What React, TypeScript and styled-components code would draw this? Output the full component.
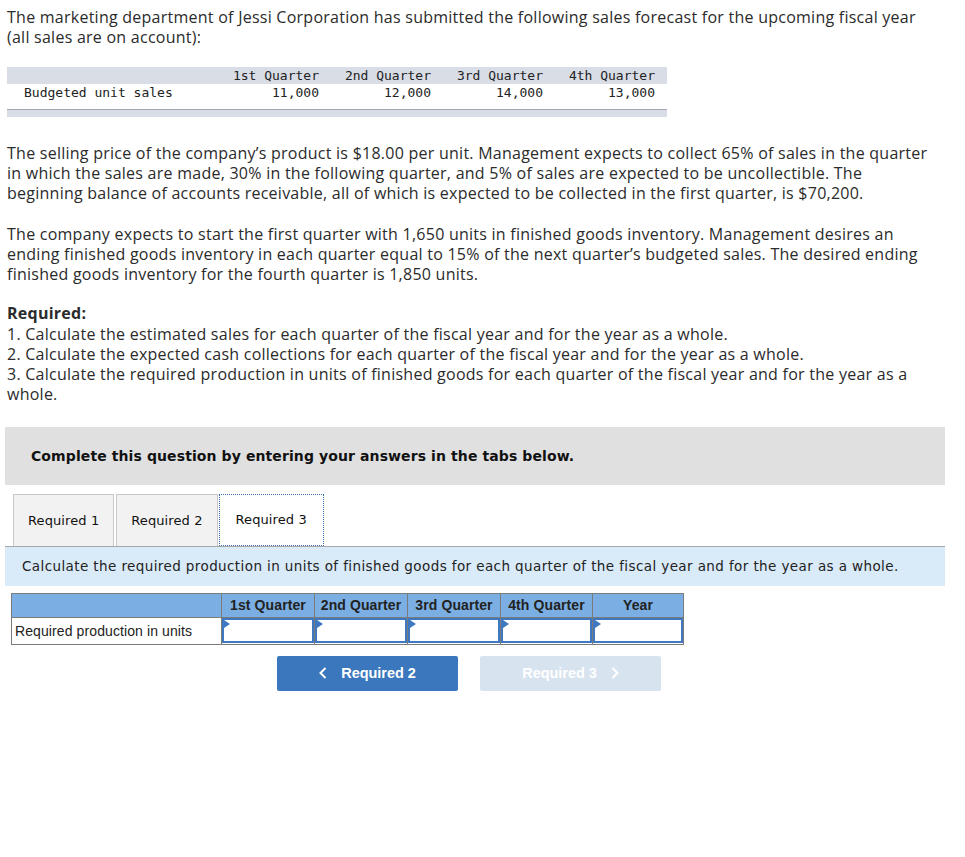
import React from 'react';
import styled, { createGlobalStyle } from 'styled-components';

const GlobalStyle = createGlobalStyle`
  html, body {
    margin: 0;
    padding: 0;
    background: #fff;
  }
  body {
    font-family: "Open Sans", "Liberation Sans", sans-serif;
    color: #2b2b2b;
  }
`;

const Page = styled.div`
  width: 940px;
  padding: 7px 0 0 5px;
`;

const Paragraph = styled.p<{ $gap?: number }>`
  width: 930px;
  margin: ${(p) => p.$gap ?? 0}px 0 0 0;
  padding-left: 2px;
  font-size: 16px;
  letter-spacing: 0.25px;
  line-height: 20px;
`;

const Heading = styled.div`
  font-weight: 700;
  margin-bottom: 1px;
`;

const ForecastTable = styled.table`
  margin: 20px 0 0 2px;
  border-collapse: collapse;
  font-family: "DejaVu Sans Mono", "Liberation Mono", monospace;
  font-size: 13px;
  color: #222;
`;

const ForecastHead = styled.th<{ $label?: boolean }>`
  background: #d9dde6;
  font-weight: 400;
  text-align: right;
  padding: 0 12px 0 0;
  height: 17px;
  width: ${(p) => (p.$label ? '200px' : '100px')};
`;

const ForecastCell = styled.td<{ $label?: boolean }>`
  text-align: ${(p) => (p.$label ? 'left' : 'right')};
  padding: ${(p) => (p.$label ? '0 0 0 17px' : '0 12px 0 0')};
  height: 17px;
`;

const ForecastFoot = styled.td`
  height: 7px;
  padding: 0;
  background: #d9dde6;
  border-top: 1px solid #a3a6ad;
`;

const Spacer = styled.tr`
  height: 8px;
`;

const Prompt = styled.div`
  margin-top: 23px;
  background: #e0e0e0;
  height: 58px;
  display: flex;
  align-items: center;
  padding-left: 26px;
  font-family: "DejaVu Sans", Verdana, sans-serif;
  font-weight: 700;
  font-size: 14px;
  letter-spacing: 0.1px;
  color: #111;
`;

const TabBar = styled.div`
  display: flex;
  margin-top: 9px;
  padding-left: 8px;
  gap: 2px;
  border-bottom: 1px solid #a8a8a8;
`;

const Tab = styled.div<{ $active?: boolean }>`
  height: 52px;
  display: flex;
  align-items: center;
  justify-content: center;
  padding: 0 ${(p) => (p.$active ? '16px' : '14px')};
  margin-left: ${(p) => (p.$active ? '-1px' : '0')};
  font-family: "DejaVu Sans", Verdana, sans-serif;
  font-size: 13px;
  letter-spacing: 0.1px;
  color: #111;
  background: ${(p) => (p.$active ? '#fff' : '#f2f2f2')};
  border: ${(p) => (p.$active ? '1px dotted #3a6fb5' : '1px solid #c8c8c8')};
  border-bottom: ${(p) => (p.$active ? '1px dotted #3a6fb5' : 'none')};
  margin-bottom: ${(p) => (p.$active ? '-1px' : '0')};
  box-sizing: border-box;
`;

const Instruction = styled.div`
  background: #d9eaf8;
  height: 39px;
  display: flex;
  align-items: center;
  padding-left: 17px;
  font-family: "DejaVu Sans", Verdana, sans-serif;
  font-size: 13.5px;
  letter-spacing: 0.4px;
  color: #222;
`;

const AnswerTable = styled.table`
  margin: 7px 0 0 6px;
  border-collapse: collapse;
  font-family: "Liberation Sans", Arial, sans-serif;
  font-size: 14px;
  letter-spacing: 0.1px;
  color: #222;
`;

const AnswerHead = styled.th<{ $w: number }>`
  width: ${(p) => p.$w}px;
  height: 24px;
  padding: 0;
  background: #7bafe3;
  border: 1px solid #7b7b7b;
  font-weight: 700;
  text-align: center;
  box-sizing: border-box;
`;

const AnswerLabel = styled.td`
  height: 26px;
  padding: 0 0 0 3px;
  border: 1px solid #7b7b7b;
  text-align: left;
`;

const AnswerCell = styled.td`
  padding: 0;
  border: 1px solid #7b7b7b;
  height: 26px;
`;

const InputBox = styled.div`
  position: relative;
  height: 25px;
  border: 2px solid #3d78c0;
  border-width: 2px 2px 2px 2px;
  box-sizing: border-box;
  background: #fff;
`;

const Marker = styled.span`
  position: absolute;
  left: 0;
  top: 0;
  width: 0;
  height: 0;
  border-top: 4px solid transparent;
  border-bottom: 4px solid transparent;
  border-left: 6px solid #3d78c0;
`;

const NavRow = styled.div`
  display: flex;
  gap: 22px;
  margin: 11px 0 0 272px;
`;

const NavButton = styled.div<{ $disabled?: boolean }>`
  width: 181px;
  height: 35px;
  border-radius: 2px;
  display: flex;
  align-items: center;
  justify-content: center;
  gap: 14px;
  font-family: "Liberation Sans", Arial, sans-serif;
  font-weight: 700;
  font-size: 14.5px;
  letter-spacing: -0.05px;
  color: #fff;
  background: ${(p) => (p.$disabled ? '#d8e3f0' : '#3b77bc')};
`;

const Chevron = styled.svg`
  width: 8px;
  height: 12px;
`;

const quarters = ['1st Quarter', '2nd Quarter', '3rd Quarter', '4th Quarter'];
const units = ['11,000', '12,000', '14,000', '13,000'];
const answerCols = [
  { label: '1st Quarter', w: 93 },
  { label: '2nd Quarter', w: 93 },
  { label: '3rd Quarter', w: 93 },
  { label: '4th Quarter', w: 92 },
  { label: 'Year', w: 91 },
];

export default function App() {
  return (
    <Page>
      <GlobalStyle />
      <Paragraph>
        The marketing department of Jessi Corporation has submitted the following sales forecast for the upcoming fiscal year
        (all sales are on account):
      </Paragraph>

      <ForecastTable>
        <thead>
          <tr>
            <ForecastHead $label />
            {quarters.map((q) => (
              <ForecastHead key={q}>{q}</ForecastHead>
            ))}
          </tr>
        </thead>
        <tbody>
          <tr>
            <ForecastCell $label>Budgeted unit sales</ForecastCell>
            {units.map((u, i) => (
              <ForecastCell key={i}>{u}</ForecastCell>
            ))}
          </tr>
          <Spacer />
          <tr>
            <ForecastFoot colSpan={5} />
          </tr>
        </tbody>
      </ForecastTable>

      <Paragraph $gap={26}>
        The selling price of the company’s product is $18.00 per unit. Management expects to collect 65% of sales in the quarter
        in which the sales are made, 30% in the following quarter, and 5% of sales are expected to be uncollectible. The
        beginning balance of accounts receivable, all of which is expected to be collected in the first quarter, is $70,200.
      </Paragraph>

      <Paragraph $gap={21}>
        The company expects to start the first quarter with 1,650 units in finished goods inventory. Management desires an
        ending finished goods inventory in each quarter equal to 15% of the next quarter’s budgeted sales. The desired ending
        finished goods inventory for the fourth quarter is 1,850 units.
      </Paragraph>

      <Paragraph $gap={19}>
        <Heading>Required:</Heading>
        1. Calculate the estimated sales for each quarter of the fiscal year and for the year as a whole.
        <br />
        2. Calculate the expected cash collections for each quarter of the fiscal year and for the year as a whole.
        <br />
        3. Calculate the required production in units of finished goods for each quarter of the fiscal year and for the year as a
        whole.
      </Paragraph>

      <Prompt>Complete this question by entering your answers in the tabs below.</Prompt>

      <TabBar>
        <Tab>Required 1</Tab>
        <Tab>Required 2</Tab>
        <Tab $active>Required 3</Tab>
      </TabBar>

      <Instruction>
        Calculate the required production in units of finished goods for each quarter of the fiscal year and for the year as a whole.
      </Instruction>

      <AnswerTable>
        <thead>
          <tr>
            <AnswerHead $w={210} />
            {answerCols.map((c) => (
              <AnswerHead key={c.label} $w={c.w}>
                {c.label}
              </AnswerHead>
            ))}
          </tr>
        </thead>
        <tbody>
          <tr>
            <AnswerLabel>Required production in units</AnswerLabel>
            {answerCols.map((c) => (
              <AnswerCell key={c.label}>
                <InputBox>
                  <Marker />
                </InputBox>
              </AnswerCell>
            ))}
          </tr>
        </tbody>
      </AnswerTable>

      <NavRow>
        <NavButton>
          <Chevron viewBox="0 0 8 12">
            <path d="M6.5 1 L1.5 6 L6.5 11" fill="none" stroke="#fff" strokeWidth="2" />
          </Chevron>
          Required 2
        </NavButton>
        <NavButton $disabled>
          Required 3
          <Chevron viewBox="0 0 8 12">
            <path d="M1.5 1 L6.5 6 L1.5 11" fill="none" stroke="#fff" strokeWidth="2" />
          </Chevron>
        </NavButton>
      </NavRow>
    </Page>
  );
}
